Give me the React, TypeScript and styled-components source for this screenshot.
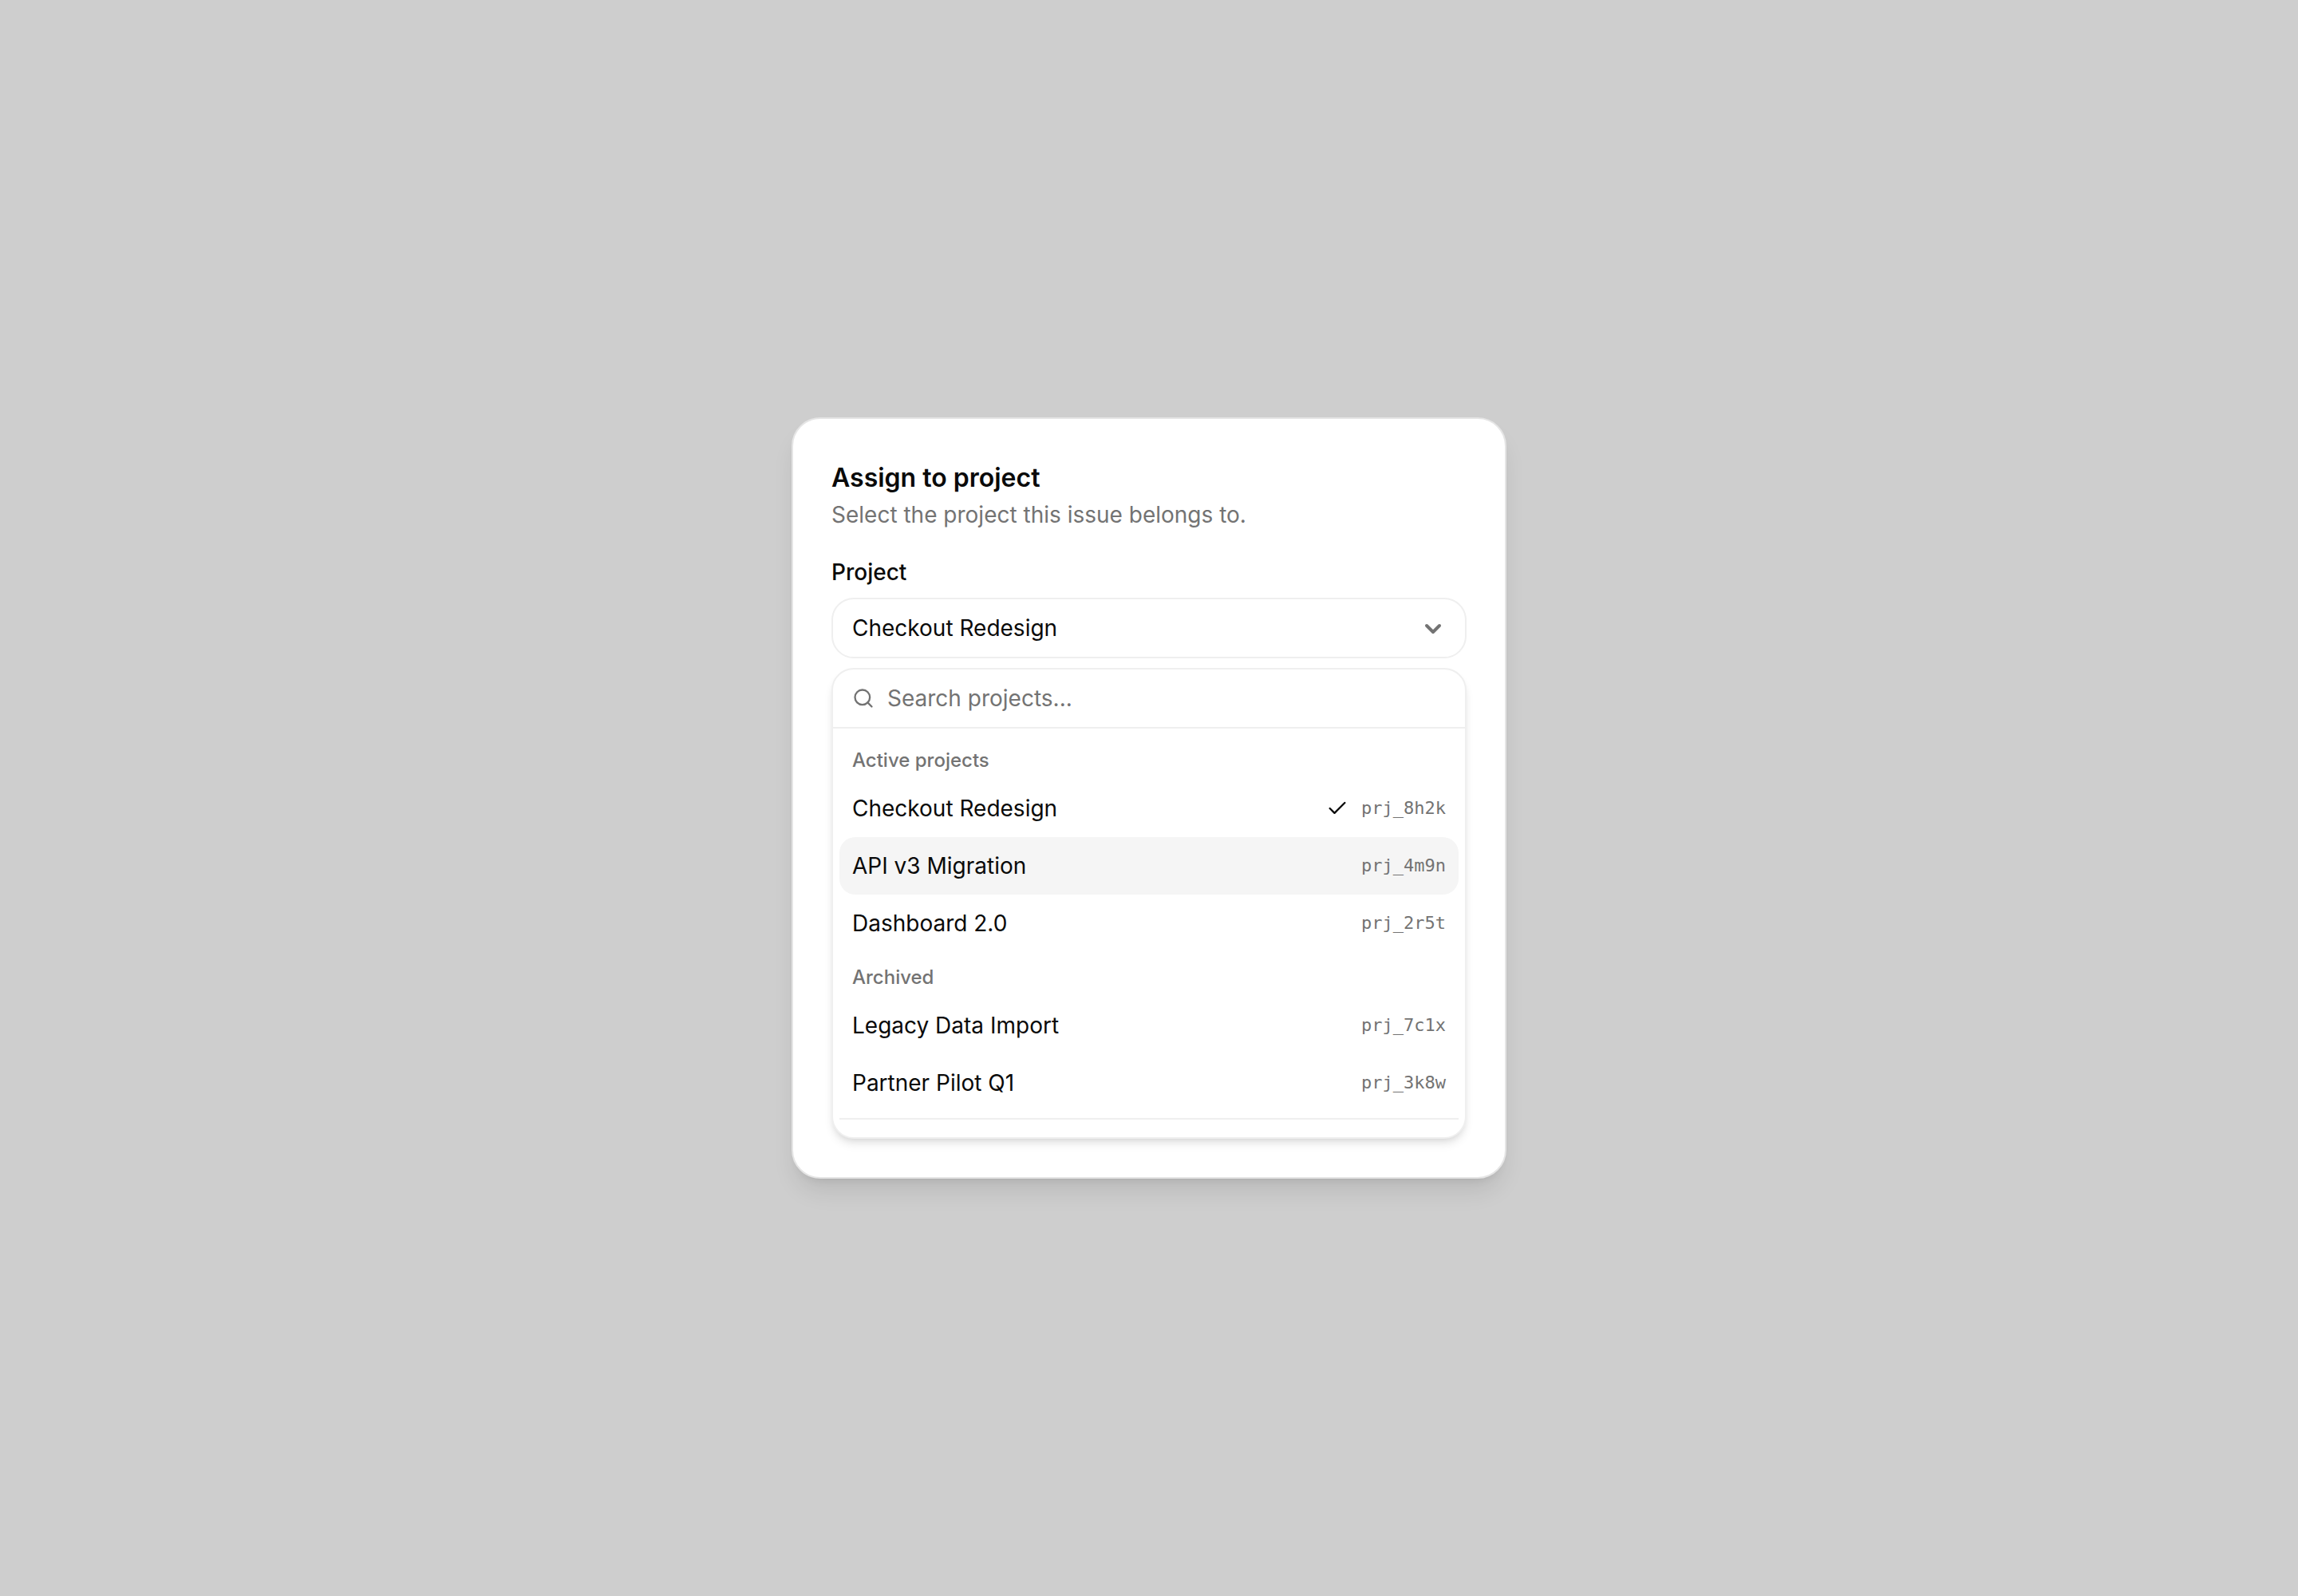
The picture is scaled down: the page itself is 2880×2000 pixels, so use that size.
import React, { useState } from "react";
import styled, { createGlobalStyle } from "styled-components";
import { Check, Search } from "lucide-react";

const sans = `Inter, "Liberation Sans", sans-serif`;
const mono = `"DejaVu Sans Mono", monospace`;

const color = {
  backdrop: "#cecece",
  surface: "#ffffff",
  text: "#0a0a0a",
  muted: "#737373",
  cardBorder: "#e5e5e5",
  border: "#efefef",
  accent: "#f5f5f5",
};

const GlobalStyle = createGlobalStyle`
  *, *::before, *::after { box-sizing: border-box; }
  body {
    margin: 0;
    background: ${color.backdrop};
    color: ${color.text};
    font-family: ${sans};
    font-size: 28px;
    line-height: 40px;
  }
`;

const Page = styled.main`
  min-height: 100vh;
  display: flex;
  align-items: center;
  justify-content: center;
`;

const Card = styled.section`
  width: 100%;
  max-width: 896px;
  padding: 48px;
  display: flex;
  flex-direction: column;
  gap: 32px;
  background: ${color.surface};
  border: 2px solid ${color.cardBorder};
  border-radius: 36px;
  box-shadow: 0 20px 30px -6px rgba(0, 0, 0, 0.1), 0 8px 12px -8px rgba(0, 0, 0, 0.1);
`;

const Header = styled.header`
  display: flex;
  flex-direction: column;
`;

const Title = styled.h2`
  margin: 0;
  font-size: 32px;
  line-height: 52px;
  font-weight: 600;
`;

const Description = styled.p`
  margin: 0;
  color: ${color.muted};
`;

const Field = styled.div`
  display: flex;
  flex-direction: column;
  gap: 12px;
`;

const FieldLabel = styled.label`
  font-weight: 500;
`;

const Trigger = styled.button`
  display: flex;
  align-items: center;
  justify-content: space-between;
  height: 76px;
  padding: 0 24px;
  background: ${color.surface};
  border: 2px solid ${color.border};
  border-radius: 28px;
  color: inherit;
  font: inherit;
  text-align: left;
  cursor: pointer;
`;

const Popup = styled.div`
  overflow: hidden;
  background: ${color.surface};
  border: 2px solid ${color.border};
  border-radius: 28px;
  box-shadow: 0 8px 12px -2px rgba(0, 0, 0, 0.1), 0 4px 8px -4px rgba(0, 0, 0, 0.1);
`;

const SearchRow = styled.label`
  display: flex;
  align-items: center;
  gap: 16px;
  height: 74px;
  padding: 0 24px;
  border-bottom: 2px solid ${color.border};
  color: ${color.muted};
`;

const SearchInput = styled.input`
  flex: 1;
  min-width: 0;
  padding: 0;
  border: 0;
  outline: 0;
  background: transparent;
  color: ${color.text};
  font: inherit;

  &::placeholder {
    color: ${color.muted};
    opacity: 1;
  }
`;

const List = styled.div`
  max-height: 512px;
  padding: 8px;
  overflow-y: auto;
  scrollbar-width: none;
`;

const GroupLabel = styled.div`
  padding: 16px 16px 8px;
  color: ${color.muted};
  font-size: 24px;
  line-height: 32px;
  font-weight: 500;
`;

const Option = styled.button<{ $active: boolean }>`
  display: flex;
  align-items: center;
  gap: 16px;
  width: 100%;
  height: 72px;
  padding: 0 16px;
  border: 0;
  border-radius: 20px;
  background: ${(p) => (p.$active ? color.accent : "transparent")};
  color: inherit;
  font: inherit;
  text-align: left;
  cursor: pointer;
`;

const OptionName = styled.span`
  flex: 1;
`;

const OptionCode = styled.span`
  color: ${color.muted};
  font-family: ${mono};
  font-size: 22px;
  line-height: 32px;
`;

const Separator = styled.hr`
  height: 2px;
  margin: 8px 0;
  border: 0;
  background: ${color.border};
`;

const ListFooter = styled.div`
  height: 14px;
`;

const groups = [
  {
    label: "Active projects",
    projects: [
      { name: "Checkout Redesign", code: "prj_8h2k" },
      { name: "API v3 Migration", code: "prj_4m9n" },
      { name: "Dashboard 2.0", code: "prj_2r5t" },
    ],
  },
  {
    label: "Archived",
    projects: [
      { name: "Legacy Data Import", code: "prj_7c1x" },
      { name: "Partner Pilot Q1", code: "prj_3k8w" },
    ],
  },
];

const ChevronIcon = () => (
  <svg width="32" height="32" viewBox="0 0 32 32" fill="none" stroke={color.muted} strokeWidth="4" strokeLinecap="round" strokeLinejoin="round" aria-hidden="true">
    <path d="M8 13l8 8 8-8" />
  </svg>
);

export default function App() {
  const [selected, setSelected] = useState("prj_8h2k");
  const [active, setActive] = useState("prj_4m9n");
  const current = groups.flatMap((g) => g.projects).find((p) => p.code === selected);

  return (
    <>
      <GlobalStyle />
      <Page>
        <Card>
          <Header>
            <Title>Assign to project</Title>
            <Description>Select the project this issue belongs to.</Description>
          </Header>
          <Field>
            <FieldLabel htmlFor="project">Project</FieldLabel>
            <Trigger id="project" type="button" aria-haspopup="listbox" aria-expanded="true" aria-controls="project-list">
              {current?.name}
              <ChevronIcon />
            </Trigger>
            <Popup>
              <SearchRow>
                <Search size={28} aria-hidden="true" />
                <SearchInput type="text" placeholder="Search projects..." aria-label="Search projects" />
              </SearchRow>
              <List id="project-list" role="listbox" aria-label="Projects">
                {groups.map((group) => (
                  <div key={group.label} role="group" aria-label={group.label}>
                    <GroupLabel>{group.label}</GroupLabel>
                    {group.projects.map((p) => (
                      <Option
                        key={p.code}
                        type="button"
                        role="option"
                        aria-selected={p.code === selected}
                        $active={p.code === active}
                        onMouseEnter={() => setActive(p.code)}
                        onClick={() => setSelected(p.code)}
                      >
                        <OptionName>{p.name}</OptionName>
                        {p.code === selected && <Check size={28} aria-hidden="true" />}
                        <OptionCode>{p.code}</OptionCode>
                      </Option>
                    ))}
                  </div>
                ))}
                <Separator />
                <ListFooter />
              </List>
            </Popup>
          </Field>
        </Card>
      </Page>
    </>
  );
}
